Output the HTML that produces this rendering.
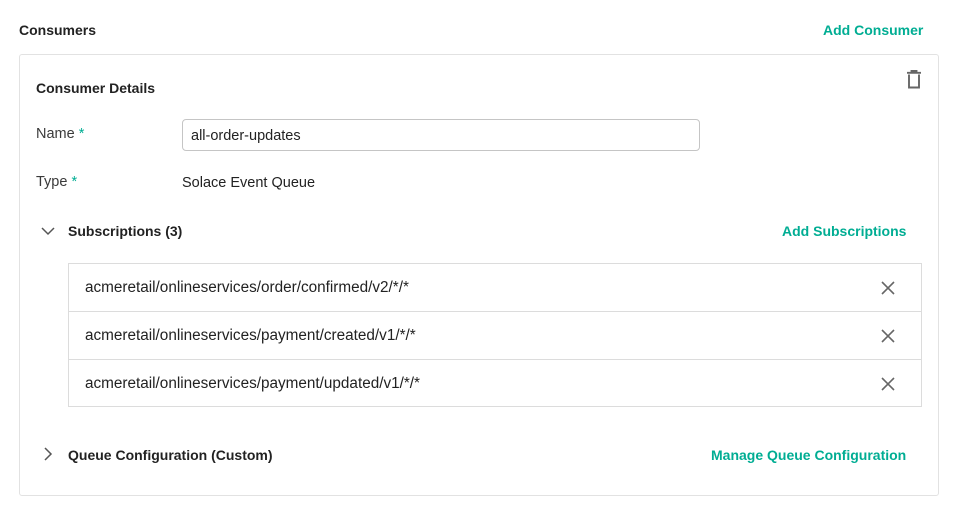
<!DOCTYPE html>
<html><head><style>
*{margin:0;padding:0;box-sizing:border-box}
body{width:955px;height:514px;background:#fff;font-family:"Liberation Sans",sans-serif;color:#273749;position:relative;overflow:hidden}
.a{position:absolute;white-space:nowrap}
.b{font-weight:bold;font-size:14px;color:#222}
.g{color:#00ad93;font-weight:bold;font-size:14px}
.t{font-size:14.5px;color:#3a3a3a}
.card{position:absolute;left:19px;top:54px;width:920px;height:442px;border:1px solid #e2e2e2;border-radius:3px}
.inp{position:absolute;left:182px;top:119px;width:518px;height:32px;border:1px solid #c5c5c5;border-radius:4px;padding:8px 8px;font-size:14.5px;color:#222}
.list{position:absolute;left:68px;top:263px;width:854px;height:144px;border:1px solid #dcdcdc}
.row{height:48px;border-bottom:1px solid #dcdcdc;position:relative;padding:15px 16px;font-size:15.3px;color:#222}
.row:last-child{border-bottom:none}
.x{position:absolute;right:26px;top:17px}
.s{color:#00ad93}
</style></head><body>
<div class="a b" style="left:19px;top:22px">Consumers</div>
<div class="a g" style="left:823px;top:22px">Add Consumer</div>
<div class="card"></div>
<svg class="a" style="left:906px;top:70px" width="16" height="19" viewBox="0 0 16 19"><path d="M1 2.8h14M5.5 2.8V1h5v1.8M3 4.5v13h10v-13" fill="none" stroke="#666" stroke-width="1.9"/></svg>
<div class="a b" style="left:36px;top:80px">Consumer Details</div>
<div class="a t" style="left:36px;top:126px">Name <span class="s">*</span></div>
<div class="inp">all-order-updates</div>
<div class="a t" style="left:36px;top:174px">Type <span class="s">*</span></div>
<div class="a t" style="left:182px;top:175px;color:#222">Solace Event Queue</div>
<svg class="a" style="left:41px;top:226px" width="14" height="10" viewBox="0 0 14 10"><path d="M1 2l6 6 6-6" fill="none" stroke="#555" stroke-width="1.5"/></svg>
<div class="a b" style="left:68px;top:223px">Subscriptions (3)</div>
<div class="a g" style="left:782px;top:223px">Add Subscriptions</div>
<div class="list">
<div class="row">acmeretail/onlineservices/order/confirmed/v2/*/*<svg class="x" width="14" height="14" viewBox="0 0 14 14"><path d="M1 1l12 12M13 1L1 13" stroke="#666" stroke-width="1.6"/></svg></div>
<div class="row">acmeretail/onlineservices/payment/created/v1/*/*<svg class="x" width="14" height="14" viewBox="0 0 14 14"><path d="M1 1l12 12M13 1L1 13" stroke="#666" stroke-width="1.6"/></svg></div>
<div class="row">acmeretail/onlineservices/payment/updated/v1/*/*<svg class="x" width="14" height="14" viewBox="0 0 14 14"><path d="M1 1l12 12M13 1L1 13" stroke="#666" stroke-width="1.6"/></svg></div>
</div>
<svg class="a" style="left:43px;top:447px" width="10" height="14" viewBox="0 0 10 14"><path d="M2 1l6 6-6 6" fill="none" stroke="#555" stroke-width="1.5"/></svg>
<div class="a b" style="left:68px;top:447px">Queue Configuration (Custom)</div>
<div class="a g" style="left:711px;top:447px">Manage Queue Configuration</div>
</body></html>
